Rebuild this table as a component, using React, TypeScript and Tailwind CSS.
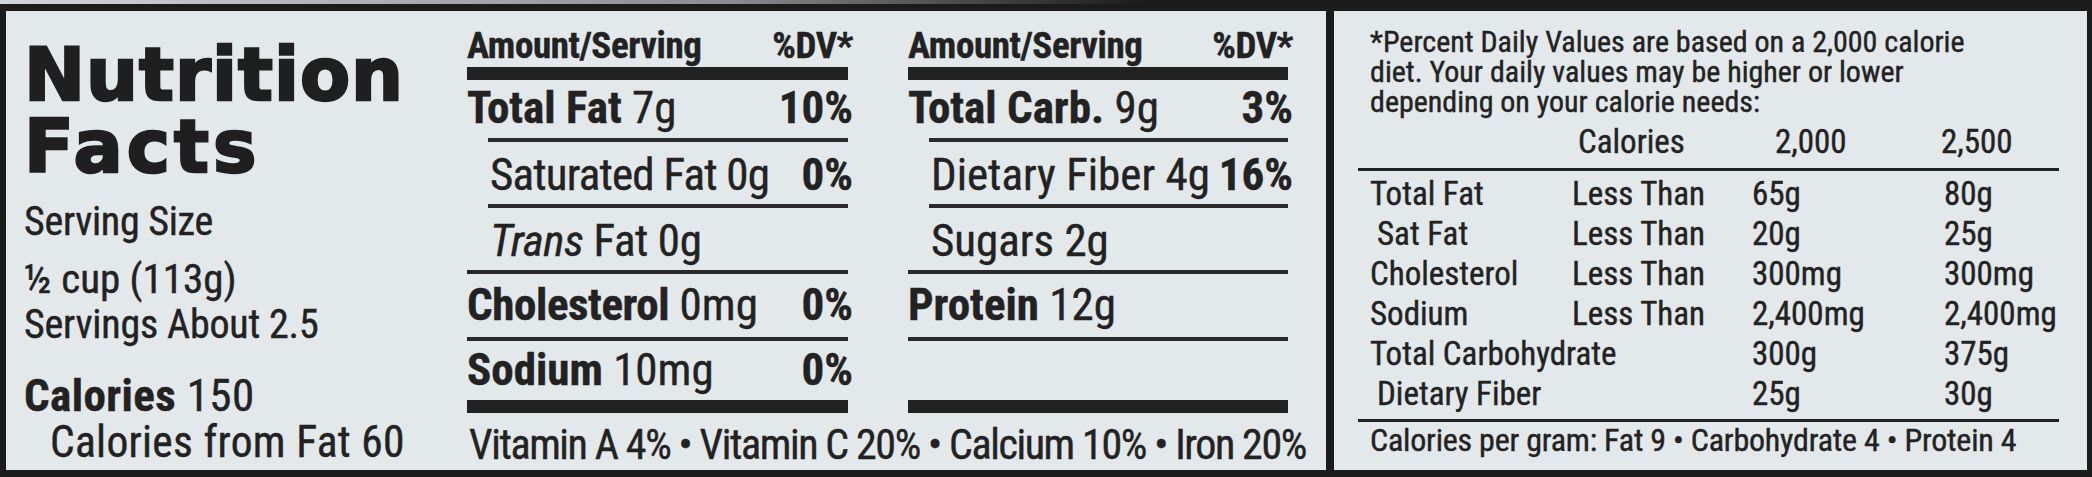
import React from "react";

const RC = "font-['Roboto_Condensed','Liberation_Sans',sans-serif]";

function Bar() {
  return <div className="h-[13px] mr-[5px] bg-[#222]" />;
}
function Line({ indent }: { indent?: boolean }) {
  return <div className={`h-[4px] mr-[5px] bg-[#2a2a2a] ${indent ? "ml-[21px]" : ""}`} />;
}

function Header() {
  return (
    <div className="flex justify-between text-[37px] leading-[36px] font-bold tracking-[-0.4px] whitespace-nowrap">
      <span>Amount/Serving</span>
      <span>%DV*</span>
    </div>
  );
}

export default function App() {
  return (
    <div className={`w-[2092px] h-[477px] bg-[#1b1b1b] flex flex-col text-[#222] [-webkit-text-stroke:0.4px_#222] ${RC}`}>
      <div className="h-[4px] bg-gradient-to-r from-[#d3d7d9] via-[#8a8c8d] via-35% to-[#1b1b1b] to-55%" />
      <div className="flex-1 flex gap-[8px] pt-[7px] pl-[6px] pr-[5px] pb-[7px]">
        {/* LEFT PANEL */}
        <section className="w-[1320px] h-full bg-[#e3e8eb] flex">
          {/* Column 1 */}
          <div className="w-[461px] pl-[18px] pt-[28px] flex flex-col">
            <h1 className="font-['DejaVu_Sans',sans-serif] font-bold text-[73px] leading-[72px] text-[#1f1f1f] [-webkit-text-stroke:2.5px_#1f1f1f]">
              <span className="block tracking-[1px]">Nutrition</span>
              <span className="block tracking-[4px]">Facts</span>
            </h1>
            <div className="mt-[17px] text-[40px] leading-[44px] tracking-[-0.3px] whitespace-nowrap">Serving Size</div>
            <div className="mt-[13px] text-[41px] leading-[44px] whitespace-nowrap">½ cup (113g)</div>
            <div className="mt-[2px] text-[40px] leading-[44px] tracking-[-0.2px] whitespace-nowrap">Servings About 2.5</div>
            <div className="mt-[27px] text-[45px] leading-[44px] tracking-[0.4px] whitespace-nowrap">
              <span className="font-bold">Calories</span> 150
            </div>
            <div className="mt-[3px] pl-[26px] text-[43.5px] leading-[44px] tracking-[0.3px] whitespace-nowrap">Calories from Fat 60</div>
          </div>

          {/* Columns 2 & 3 with vitamin line */}
          <div className="w-[826px] flex flex-col">
            <div className="flex gap-[55px]">
              {/* Column 2 */}
              <div className="w-[386px] pt-[17px] flex flex-col">
                <Header />
                <div className="mt-[3px]">
                  <Bar />
                </div>
                <div className="h-[58px] pt-[5px] flex justify-between text-[45px] leading-[46px] whitespace-nowrap">
                  <span>
                    <span className="font-bold">Total Fat</span> 7g
                  </span>
                  <span className="font-bold">10%</span>
                </div>
                <Line indent />
                <div className="h-[62px] pt-[10px] pl-[23px] flex justify-between text-[45px] leading-[46px] whitespace-nowrap">
                  <span className="tracking-[-0.8px]">Saturated Fat 0g</span>
                  <span className="font-bold">0%</span>
                </div>
                <Line indent />
                <div className="h-[62px] pt-[10px] pl-[23px] flex justify-between text-[45px] leading-[46px] whitespace-nowrap">
                  <span className="tracking-[-0.4px]">
                    <i>Trans</i> Fat 0g
                  </span>
                </div>
                <Line />
                <div className="h-[63px] pt-[8px] flex justify-between text-[45px] leading-[46px] whitespace-nowrap">
                  <span>
                    <span className="font-bold tracking-[-0.4px]">Cholesterol</span> 0mg
                  </span>
                  <span className="font-bold">0%</span>
                </div>
                <Line />
                <div className="h-[59px] pt-[6px] flex justify-between text-[45px] leading-[46px] whitespace-nowrap">
                  <span>
                    <span className="font-bold">Sodium</span> 10mg
                  </span>
                  <span className="font-bold">0%</span>
                </div>
                <Bar />
              </div>

              {/* Column 3 */}
              <div className="w-[385px] pt-[17px] flex flex-col">
                <Header />
                <div className="mt-[3px]">
                  <Bar />
                </div>
                <div className="h-[58px] pt-[5px] flex justify-between text-[45px] leading-[46px] whitespace-nowrap">
                  <span>
                    <span className="font-bold">Total Carb.</span> 9g
                  </span>
                  <span className="font-bold">3%</span>
                </div>
                <Line indent />
                <div className="h-[62px] pt-[10px] pl-[23px] flex justify-between gap-[6px] text-[45px] leading-[46px] whitespace-nowrap">
                  <span>Dietary Fiber 4g</span>
                  <span className="font-bold">16%</span>
                </div>
                <Line indent />
                <div className="h-[62px] pt-[10px] pl-[23px] flex justify-between text-[45px] leading-[46px] whitespace-nowrap">
                  <span>Sugars 2g</span>
                </div>
                <Line />
                <div className="h-[63px] pt-[8px] flex justify-between text-[45px] leading-[46px] whitespace-nowrap">
                  <span>
                    <span className="font-bold">Protein</span> 12g
                  </span>
                </div>
                <Line />
                <div className="h-[59px]" />
                <Bar />
              </div>
            </div>
            <div className="mt-[9px] text-[42px] leading-[46px] tracking-[-1.4px] whitespace-nowrap pl-[2px]">
              Vitamin A 4% • Vitamin C 20% • Calcium 10% • Iron 20%
            </div>
          </div>
        </section>

        {/* RIGHT PANEL */}
        <section className="flex-1 h-full bg-[#e3e8eb] pl-[36px] pt-[16px] flex flex-col">
          <div className="text-[30px] leading-[30px] whitespace-nowrap">
            <div>*Percent Daily Values are based on a 2,000 calorie</div>
            <div>diet. Your daily values may be higher or lower</div>
            <div>depending on your calorie needs:</div>
          </div>
          <div className="mt-[10px] grid grid-cols-[202px_180px_192px_1fr] text-[33px] leading-[30px] whitespace-nowrap">
            <span />
            <span className="pl-[6px]">Calories</span>
            <span className="pl-[23px]">2,000</span>
            <span className="-ml-[3px]">2,500</span>
          </div>
          <div className="mt-[11px] -ml-[12px] w-[701px] h-[3px] bg-[#222]" />
          <div className="mt-[3px] grid grid-cols-[202px_180px_192px_1fr] text-[33px] leading-[40px] whitespace-nowrap">
            <span>Total Fat</span>
            <span>Less Than</span>
            <span>65g</span>
            <span>80g</span>
            <span className="pl-[7px]">Sat Fat</span>
            <span>Less Than</span>
            <span>20g</span>
            <span>25g</span>
            <span>Cholesterol</span>
            <span>Less Than</span>
            <span>300mg</span>
            <span>300mg</span>
            <span>Sodium</span>
            <span>Less Than</span>
            <span>2,400mg</span>
            <span>2,400mg</span>
            <span className="col-span-2">Total Carbohydrate</span>
            <span>300g</span>
            <span>375g</span>
            <span className="col-span-2 pl-[7px]">Dietary Fiber</span>
            <span>25g</span>
            <span>30g</span>
          </div>
          <div className="mt-[5px] -ml-[12px] w-[701px] h-[3px] bg-[#222]" />
          <div className="mt-[3px] text-[32px] leading-[30px] tracking-[-0.2px] whitespace-nowrap">
            Calories per gram: Fat 9 • Carbohydrate 4 • Protein 4
          </div>
        </section>
      </div>
    </div>
  );
}
